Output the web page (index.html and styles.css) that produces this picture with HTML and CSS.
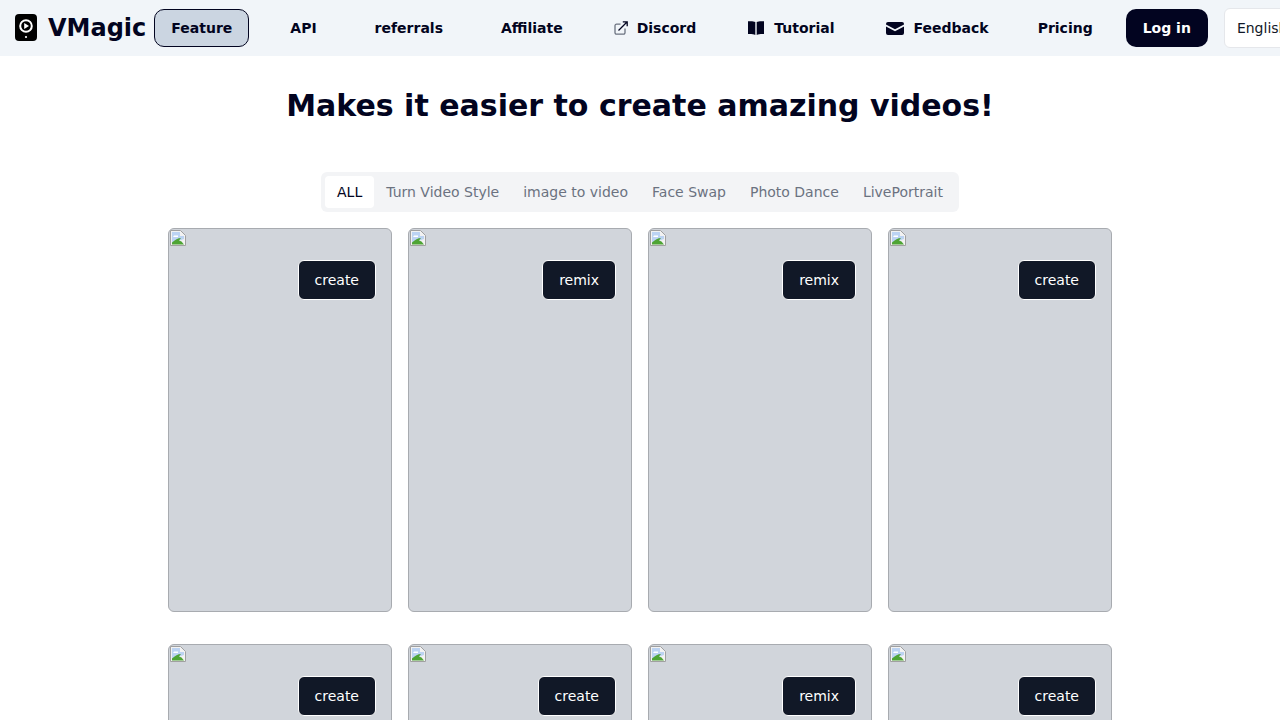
FILE: index.html
```html
<!DOCTYPE html>
<html lang="en">
<head>
<meta charset="UTF-8">
<meta name="viewport" content="width=device-width, initial-scale=1.0">
<title>VMagic</title>
<link rel="stylesheet" href="styles.css">
</head>
<body>

<header class="nav">
<a class="logo">
<svg class="logo-icon" viewBox="0 0 22 27" width="22" height="27">
<rect width="22" height="27" rx="4" fill="#000"/>
<circle cx="11" cy="12" r="5.800" fill="none" stroke="#fff" stroke-width="2"/>
<path d="M9.200 9l4.800 3-4.800 3z" fill="#fff"/>
<circle cx="11" cy="23" r="1.100" fill="#fff"/>
</svg>
<span>VMagic</span>
</a>
<a class="nav-active">Feature</a>
<a class="nav-link first">API</a>
<a class="nav-link wide">referrals</a>
<a class="nav-link wide">Affiliate</a>
<a class="nav-link">
<svg class="nav-icon" viewBox="0 0 14 14" width="14" height="14" fill="none" stroke-width="1.300">
<path d="M6.500 3.200H2.500a1.500 1.500 0 0 0-1.500 1.500v7a1.500 1.500 0 0 0 1.500 1.500h7a1.500 1.500 0 0 0 1.500-1.500V7.500" stroke="#6b7280"/>
<path d="M4.500 9.500L13 1M8.800 .8h4.400v4.400" stroke="#020420"/>
</svg>
Discord</a>
<a class="nav-link mid">
<svg class="nav-icon" viewBox="0 0 16 14" width="16" height="14" fill="#020420">
<path d="M0 .3C2.500 0 5.500 0 7.300 1V14C5.500 13 2.500 12.800 0 13z"/>
<path d="M16 .3C13.500 0 10.500 0 8.700 1V14C10.500 13 13.500 12.800 16 13z"/>
</svg>
Tutorial</a>
<a class="nav-link mail">
<svg class="nav-icon" viewBox="0 0 18 13" width="18" height="13" fill="#020420">
<path d="M2 0h14a2 2 0 0 1 2 2v.6L9 7.300 0 2.600V2a2 2 0 0 1 2-2z"/>
<path d="M0 4.600l9 4.700 9-4.700V11a2 2 0 0 1-2 2H2a2 2 0 0 1-2-2z"/>
</svg>
Feedback</a>
<a class="nav-link tight">Pricing</a>
<a class="login">Log in</a>
<div class="lang">English</div>
</header>

<main>
<h1>Makes it easier to create amazing videos!</h1>

<div class="tabs">
<a class="tab active">ALL</a>
<a class="tab">Turn Video Style</a>
<a class="tab">image to video</a>
<a class="tab">Face Swap</a>
<a class="tab">Photo Dance</a>
<a class="tab">LivePortrait</a>
</div>

<div class="grid">
<div class="card"><svg class="broken" width="16" height="16"><use href="#broken"/></svg><button>create</button></div>
<div class="card"><svg class="broken" width="16" height="16"><use href="#broken"/></svg><button>remix</button></div>
<div class="card"><svg class="broken" width="16" height="16"><use href="#broken"/></svg><button>remix</button></div>
<div class="card"><svg class="broken" width="16" height="16"><use href="#broken"/></svg><button>create</button></div>
<div class="card"><svg class="broken" width="16" height="16"><use href="#broken"/></svg><button>create</button></div>
<div class="card"><svg class="broken" width="16" height="16"><use href="#broken"/></svg><button>create</button></div>
<div class="card"><svg class="broken" width="16" height="16"><use href="#broken"/></svg><button>remix</button></div>
<div class="card"><svg class="broken" width="16" height="16"><use href="#broken"/></svg><button>create</button></div>
</div>
</main>

<svg width="0" height="0" class="defs">
<symbol id="broken" viewBox="0 0 16 16">
<path d="M.5.500h10l5 5v10H.500z" fill="#f2f2f2" stroke="#a0a0a0"/>
<path d="M2 2h8v4h4v3L2 13z" fill="#bcd3f2"/>
<path d="M4 5.500h4v1.500H3z" fill="#fff"/>
<path d="M2 14.500V12.500C5 10 8 8 11 8l-2 2.500 2.500 1 2.500 3z" fill="#4ea434"/>
</symbol>
</svg>

</body>
</html>
```

FILE: styles.css
```css
* {
box-sizing: border-box;
}
html, body {
height: 100%;
overflow: hidden;
}
body {
margin: 0;
font-family: "DejaVu Sans", sans-serif;
font-size: 14px;
color: #020420;
background-color: #fff;
}
.defs {
display: block;
}
.nav {
display: flex;
align-items: center;
height: 56px;
padding-left: 15px;
background-color: #f1f5f9;
white-space: nowrap;
overflow: hidden;
font-weight: 700;
}
.logo {
display: flex;
align-items: center;
gap: 11px;
font-size: 24px;
}
.logo-icon {
flex: none;
margin-bottom: 1px;
}
.nav-active {
margin-left: 8px;
padding: 0 16px;
height: 38px;
line-height: 36px;
border: 1px solid #020420;
border-radius: 10px;
background-color: #cbd5e1;
}
.nav-link {
display: flex;
align-items: center;
margin-left: 51px;
}
.nav-link.first {
margin-left: 41px;
}
.nav-link.wide {
margin-left: 58px;
}
.nav-link.mid {
margin-left: 52px;
}
.nav-link.tight {
margin-left: 49px;
}
.nav-icon {
margin-right: 9px;
}
.nav-link.mid .nav-icon {
margin-right: 10px;
}
.nav-link.mail .nav-icon {
margin-right: 10px;
}
.login {
margin-left: 33px;
padding: 0 17px;
height: 38px;
line-height: 38px;
border-radius: 10px;
color: #fff;
background-color: #020420;
}
.lang {
flex: none;
margin-left: 16px;
width: 120px;
height: 40px;
padding-left: 12px;
line-height: 38px;
border: 1px solid #e5e7eb;
border-radius: 6px;
background-color: #fff;
font-weight: 400;
color: #111827;
}
main {
display: flex;
flex-direction: column;
align-items: center;
}
h1 {
margin: 32px 0 48px;
font-size: 30px;
line-height: 36px;
font-weight: 700;
}
.tabs {
display: flex;
padding: 4px;
border-radius: 6px;
background-color: #f3f4f6;
}
.tab {
padding: 0 12px;
height: 32px;
line-height: 32px;
border-radius: 4px;
color: #6b7280;
}
.tab.active {
color: #020420;
background-color: #fff;
}
.grid {
display: grid;
grid-template-columns: repeat(4, 224px);
grid-auto-rows: 384px;
gap: 32px 16px;
margin-top: 16px;
}
.card {
position: relative;
padding: 1px;
border: 1px solid #a8abb0;
border-radius: 6px;
background-color: #d1d5db;
}
.broken {
display: block;
}
.card button {
position: absolute;
top: 31px;
right: 15px;
height: 40px;
padding: 0 16px;
border: 1px solid #fff;
border-radius: 6px;
font-family: inherit;
font-size: 14px;
color: #fff;
background-color: #111827;
}
```
